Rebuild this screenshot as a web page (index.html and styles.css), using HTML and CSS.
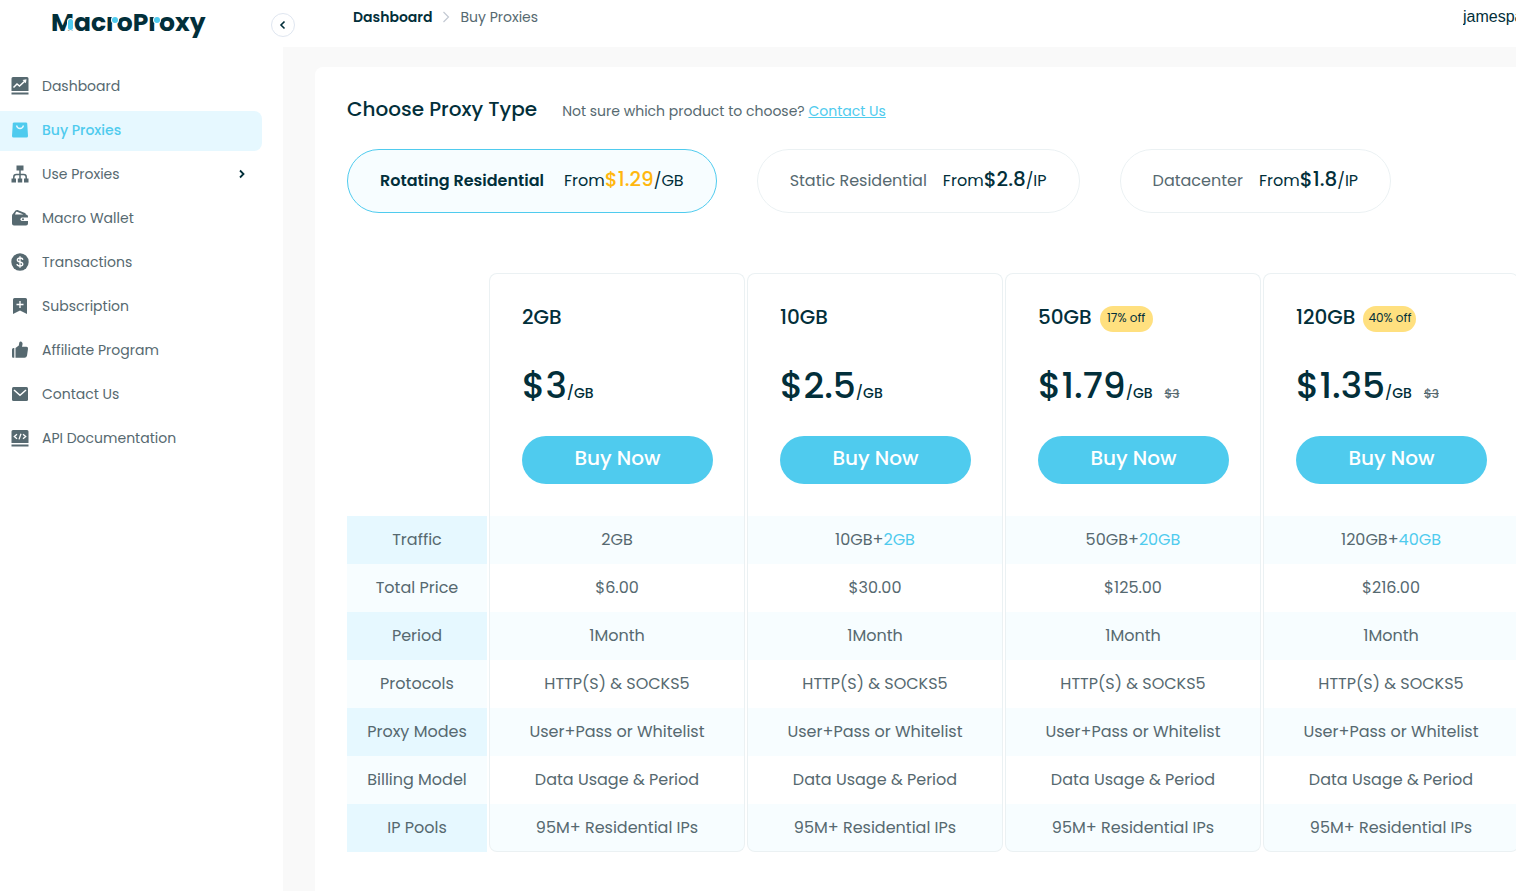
FILE: index.html
```
<!DOCTYPE html>
<html lang="en">
<head>
<meta charset="utf-8">
<title>MacroProxy - Buy Proxies</title>
<link rel="stylesheet" href="styles.css">
</head>
<body>
<div class="app">
  <aside class="sidebar">
    <div class="brand">
      <a class="logo" href="#"><span class="logo-m">M</span>ac<span class="logo-r">r</span>oP<span class="logo-r">r</span>oxy</a>
      <button class="collapse" type="button" aria-label="Collapse menu"><svg width="8" height="10" viewBox="0 0 8 10"><path d="M5.500 1.500 2 5l3.500 3.500" fill="none" stroke="#022f3a" stroke-width="1.600"/></svg></button>
    </div>
    <nav class="menu">
      <a class="item" href="#"><svg class="icon" viewBox="0 0 18 18"><path fill="currentColor" d="M2 0h14a1.500 1.500 0 0 1 1.500 1.500V14H.5V1.500A1.500 1.500 0 0 1 2 0zM.5 15.500h17v2H.5z"/><path d="M2.500 10.500 6 7l2.500 2L14 4" fill="none" stroke="#fff" stroke-width="1.500"/><path fill="#fff" d="m11.500 3 4-.8-.6 4z"/></svg>Dashboard</a>
      <a class="item active" href="#"><svg class="icon" viewBox="0 0 18 18"><path fill="currentColor" d="M3 1.500h12q1 0 1.200 1l.8 12.500q0 1.500-1.500 1.500h-13Q1 16.500 1 15l.8-12.500q.2-1 1.200-1z"/><path d="M5.500 4.500q.8 3 3.500 3t3.500-3" fill="none" stroke="#e6f8ff" stroke-width="1.300"/></svg>Buy Proxies</a>
      <a class="item" href="#"><svg class="icon" viewBox="0 0 18 18"><path fill="currentColor" d="M5.500.5h7v5h-7zM.5 13.500h4.500v4H.5zM6.800 13.500h4.400v4H6.800zM13 13.500h4.500v4H13z"/><path d="M9 5v9M2.800 14v-2q0-2.500 2.500-2.500h7.400q2.500 0 2.500 2.500v2" fill="none" stroke="currentColor" stroke-width="1.500"/></svg>Use Proxies<svg class="arrow" width="8" height="10" viewBox="0 0 8 10"><path d="M2 1.500 5.500 5 2 8.500" fill="none" stroke="#022f3a" stroke-width="1.800"/></svg></a>
      <a class="item" href="#"><svg class="icon" viewBox="0 0 18 18"><path fill="currentColor" fill-rule="evenodd" d="M1 6.800q0-1.500 1.200-2.200L4.500 1.600q1-.8 2-.5L14 4q.8.400.8 1.500 2.200.2 2.200 2v7q0 2-2 2H3q-2 0-2-2zM4 5.500h8.500L6 2.800q-.7-.2-1 .3z"/><path d="M11 8.500h6V12h-6q-1.500 0-1.500-1.700T11 8.500z" fill="#fff"/><circle cx="12" cy="10.300" r="1" fill="currentColor"/></svg>Macro Wallet</a>
      <a class="item" href="#"><svg class="icon" viewBox="0 0 18 18"><circle cx="9" cy="9" r="8.700" fill="currentColor"/><path d="M11.800 6.800Q11.500 5 9 5T6.300 7q0 1.500 2.700 2t2.800 2.200Q11.800 13 9 13t-3-2M9 3.200v11.600" fill="none" stroke="#fff" stroke-width="1.300"/></svg>Transactions</a>
      <a class="item" href="#"><svg class="icon" viewBox="0 0 18 18"><path fill="currentColor" d="M3.500 1h11Q16 1 16 2.500V17l-7-3.500L2 17V2.500Q2 1 3.500 1z"/><path d="M9 4v7M5.500 7.500h7" stroke="#fff" stroke-width="1.300"/></svg>Subscription</a>
      <a class="item" href="#"><svg class="icon" viewBox="0 0 18 18"><path fill="currentColor" d="M4.500 7 7.800 4.500 8.300 1.500Q9 .2 10.500.8 12 1.700 11.500 3.500l-.5 2.300h4.500q1.700.2 1.500 2l-1 7q-.5 2-2.500 2h-9zM1 8.500q0-1.500 1.500-1.500h.8v9.800H2q-1 0-1-1.500z"/></svg>Affiliate Program</a>
      <a class="item" href="#"><svg class="icon" viewBox="0 0 18 18"><rect x="1" y="2" width="16" height="14" rx="1.500" fill="currentColor"/><path d="m3 5 6 5.200L15 5" fill="none" stroke="#fff" stroke-width="1.500"/></svg>Contact Us</a>
      <a class="item" href="#"><svg class="icon" viewBox="0 0 18 18"><path fill="currentColor" d="M2 1h14a1.500 1.500 0 0 1 1.500 1.500V14H.5V2.500A1.500 1.500 0 0 1 2 1zM.5 15.500h17v2H.5z"/><path d="M6 5.200 3.300 7.500 6 9.800M12 5.200l2.700 2.300L12 9.800M10 4.800l-2 5.600" fill="none" stroke="#fff" stroke-width="1.300"/></svg>API Documentation</a>
    </nav>
  </aside>
  <div class="page">
    <header class="topbar">
      <nav class="crumbs" aria-label="Breadcrumb">
        <a class="crumb-home" href="#">Dashboard</a>
        <svg width="8" height="12" viewBox="0 0 8 12"><path d="m1.500 1 5 5-5 5" fill="none" stroke="#c3c9d2" stroke-width="1.200"/></svg>
        <span>Buy Proxies</span>
      </nav>
      <span class="user">jamespa</span>
    </header>
    <main class="content">
      <section class="panel">
        <div class="heading">
          <h1>Choose Proxy Type</h1>
          <p>Not sure which product to choose? <a href="#">Contact Us</a></p>
        </div>
        <div class="types">
          <button class="type selected" type="button"><span class="name">Rotating Residential</span><span class="from">From<b>$1.29</b>/GB</span></button>
          <button class="type" type="button"><span class="name">Static Residential</span><span class="from">From<b>$2.8</b>/IP</span></button>
          <button class="type" type="button"><span class="name">Datacenter</span><span class="from">From<b>$1.8</b>/IP</span></button>
        </div>
        <table class="plans">
          <thead>
            <tr>
              <td class="corner"></td>
              <th class="plan" scope="col"><div class="title">2GB</div><div class="price"><strong>$3</strong>/GB</div><button class="buy" type="button">Buy Now</button></th>
              <th class="plan" scope="col"><div class="title">10GB</div><div class="price"><strong>$2.5</strong>/GB</div><button class="buy" type="button">Buy Now</button></th>
              <th class="plan" scope="col"><div class="title">50GB<span class="badge">17% off</span></div><div class="price"><strong>$1.79</strong>/GB<s>$3</s></div><button class="buy" type="button">Buy Now</button></th>
              <th class="plan" scope="col"><div class="title">120GB<span class="badge">40% off</span></div><div class="price"><strong>$1.35</strong>/GB<s>$3</s></div><button class="buy" type="button">Buy Now</button></th>
            </tr>
          </thead>
          <tbody>
            <tr><th scope="row">Traffic</th><td>2GB</td><td>10GB+<em>2GB</em></td><td>50GB+<em>20GB</em></td><td>120GB+<em>40GB</em></td></tr>
            <tr><th scope="row">Total Price</th><td>$6.00</td><td>$30.00</td><td>$125.00</td><td>$216.00</td></tr>
            <tr><th scope="row">Period</th><td>1Month</td><td>1Month</td><td>1Month</td><td>1Month</td></tr>
            <tr><th scope="row">Protocols</th><td>HTTP(S) &amp; SOCKS5</td><td>HTTP(S) &amp; SOCKS5</td><td>HTTP(S) &amp; SOCKS5</td><td>HTTP(S) &amp; SOCKS5</td></tr>
            <tr><th scope="row">Proxy Modes</th><td>User+Pass or Whitelist</td><td>User+Pass or Whitelist</td><td>User+Pass or Whitelist</td><td>User+Pass or Whitelist</td></tr>
            <tr><th scope="row">Billing Model</th><td>Data Usage &amp; Period</td><td>Data Usage &amp; Period</td><td>Data Usage &amp; Period</td><td>Data Usage &amp; Period</td></tr>
            <tr><th scope="row">IP Pools</th><td>95M+ Residential IPs</td><td>95M+ Residential IPs</td><td>95M+ Residential IPs</td><td>95M+ Residential IPs</td></tr>
          </tbody>
        </table>
      </section>
    </main>
  </div>
</div>
</body>
</html>
```

FILE: styles.css
```
* { box-sizing: border-box; }

body {
  margin: 0;
  color: #566970;
  background: #fff;
  font: 14px/20px Poppins, Inter, sans-serif;
}

button { font: inherit; color: inherit; cursor: pointer; }
a { color: inherit; text-decoration: none; }

.app { display: flex; min-height: 100vh; }

.sidebar { flex: none; width: 283px; }

.brand {
  display: flex;
  align-items: center;
  justify-content: space-between;
  height: 50px;
  padding-left: 51px;
  margin-right: -12px;
}

.logo {
  color: #022f3a;
  font: 700 25px/46px Poppins, Lato, sans-serif;
  padding-bottom: 4px;
}

.logo-m, .logo-r { position: relative; }

.logo-m::after, .logo-r::after {
  content: "";
  position: absolute;
  background: #4fcbee;
  border-radius: 3px;
  box-shadow: 0 0 0 1px #fff;
}

.logo-m::after { right: 1px; bottom: 10px; width: 5px; height: 11px; }
.logo-r::after { right: -1px; top: 12px; width: 6px; height: 6px; }

.collapse {
  display: flex;
  align-items: center;
  justify-content: center;
  width: 24px;
  height: 24px;
  padding: 0;
  background: #fff;
  border: 1px solid #dfe6f0;
  border-radius: 50%;
}

.menu { display: grid; gap: 4px; padding: 17px 21px 0 0; }

.item {
  display: flex;
  align-items: center;
  gap: 13px;
  height: 40px;
  padding: 0 16px 2px 11px;
  border-radius: 0 8px 8px 0;
}

.item.active { color: #4fcbee; background: #e6f8ff; font-weight: 500; }
.icon { width: 18px; height: 18px; }
.arrow { margin-left: auto; }

.page { flex: 1; min-width: 0; display: flex; flex-direction: column; }

.topbar {
  display: flex;
  justify-content: space-between;
  height: 47px;
  padding: 7px 0 0 70px;
}

.crumbs { display: flex; align-items: center; gap: 10px; height: 20px; }
.crumb-home { color: #022f3a; font-weight: 600; }

.user {
  width: 53px;
  overflow: hidden;
  color: #022f3a;
  font: 16px/20px "Liberation Sans", Arial, sans-serif;
}

.content {
  flex: 1;
  display: flex;
  padding: 20px 0 0 32px;
  background: #f9f9f9;
}

.panel {
  flex: 1;
  min-width: 0;
  overflow: hidden;
  padding: 28px 0 32px 32px;
  background: #fff;
  border-radius: 8px 0 0 0;
}

.heading { display: flex; align-items: baseline; gap: 25px; }
h1 { margin: 0; color: #022f3a; font-size: 20px; font-weight: 500; line-height: 28px; }
.heading p { margin: 0; }
.heading a { color: #4fcbee; text-decoration: underline; }

.types { display: flex; gap: 40px; margin: 26px 0 60px; }

.type {
  display: flex;
  align-items: baseline;
  justify-content: space-between;
  gap: 16px;
  padding: 15px 32px 17px;
  font-size: 16px;
  line-height: 28px;
  white-space: nowrap;
  background: #fff;
  border: 1px solid #ebf1f3;
  border-radius: 32px;
}

.from { color: #022f3a; }
.from b { font-size: 20px; font-weight: 500; }
.selected { gap: 20px; background: #f7fdff; border-color: #4fcbee; }
.selected .name { color: #022f3a; font-weight: 600; }
.selected b { color: #ffb70f; }

.plans {
  table-layout: fixed;
  width: 1176px;
  margin-left: -2px;
  border-collapse: separate;
  border-spacing: 2px 0;
  text-align: center;
  font-size: 16px;
}

.plans td, .plans th { height: 48px; padding: 0; font-weight: 400; }
.plans .corner { width: 140px; }

.plans .plan {
  padding: 32px 31px 32px 32px;
  text-align: left;
  color: #022f3a;
  border: 1px solid #ebf1f3;
  border-bottom: 0;
  border-radius: 8px 8px 0 0;
}

.title {
  display: flex;
  align-items: flex-start;
  gap: 8px;
  height: 26px;
  font-size: 20px;
  line-height: 22px;
  font-weight: 500;
}

.badge {
  min-width: 53px;
  padding-bottom: 2px;
  text-align: center;
  font-size: 12px;
  line-height: 24px;
  font-weight: 400;
  background: #ffe07f;
  border-radius: 13px;
}

.price {
  display: flex;
  align-items: baseline;
  height: 56px;
  margin: 26px 0 22px;
  font-size: 14px;
  line-height: 56px;
  font-weight: 500;
}

.price strong { font-size: 36px; font-weight: 500; }
.price s { margin-left: 12px; color: #566970; font-size: 12px; }

.buy {
  display: block;
  width: 100%;
  height: 48px;
  padding: 0 0 4px;
  color: #fff;
  font-size: 20px;
  font-weight: 500;
  background: #4fcbee;
  border: 0;
  border-radius: 24px;
}

tbody th { background: #f7fdff; }
tbody td { border: solid #ebf1f3; border-width: 0 1px; }
tbody tr:nth-child(odd) th { background: #e6f8ff; }
tbody tr:nth-child(odd) td { background: #f7fdff; }
tbody tr:last-child td { border-bottom-width: 1px; border-radius: 0 0 8px 8px; }
tbody em { color: #4fcbee; font-style: normal; }
```
